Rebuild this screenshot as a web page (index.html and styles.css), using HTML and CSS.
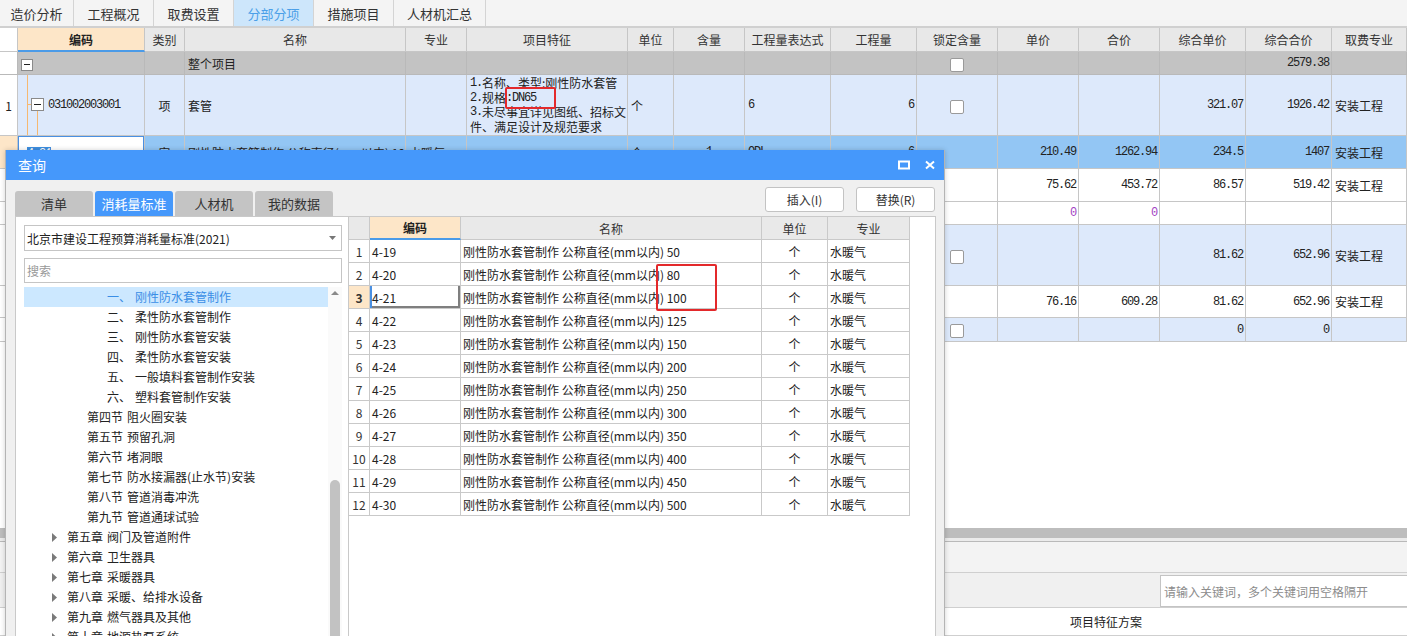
FILE: index.html
```html
<!DOCTYPE html>
<html lang="zh-CN">
<head>
<meta charset="utf-8">
<title>分部分项</title>
<link rel="stylesheet" href="styles.css">
</head>
<body>
<div class="app">
  <nav class="topbar">
    <div class="tab w74">造价分析</div>
    <div class="tab w80">工程概况</div>
    <div class="tab w80">取费设置</div>
    <div class="tab w80 active">分部分项</div>
    <div class="tab w80">措施项目</div>
    <div class="tab w92">人材机汇总</div>
  </nav>

  <div class="grid-area">
    <table class="grid">
      <colgroup>
        <col class="c-no"><col class="c-code"><col class="c-type"><col class="c-name"><col class="c-major"><col class="c-feat"><col class="c-unit"><col class="c-qty"><col class="c-expr"><col class="c-amt"><col class="c-lock"><col class="c-price"><col class="c-total"><col class="c-uprice"><col class="c-utotal"><col class="c-fee">
      </colgroup>
      <thead>
        <tr class="r-h">
          <th class="rn"></th><th class="th-code">编码</th><th>类别</th><th>名称</th><th>专业</th><th>项目特征</th><th>单位</th><th>含量</th><th>工程量表达式</th><th>工程量</th><th>锁定含量</th><th>单价</th><th>合价</th><th>综合单价</th><th>综合合价</th><th>取费专业</th>
        </tr>
      </thead>
      <tbody>
        <tr class="r-total">
          <td class="rn"></td>
          <td class="code0"><span class="mbox"></span></td>
          <td></td>
          <td class="bold">整个项目</td>
          <td></td><td></td><td></td><td></td><td></td><td></td>
          <td class="ctr"><span class="cb"></span></td>
          <td></td><td></td><td></td>
          <td class="n bold">2579.38</td>
          <td></td>
        </tr>
        <tr class="r-tall lb">
          <td class="rn">1</td>
          <td class="code0"><div class="codewrap"><svg class="tree-lines" width="30" height="60" viewBox="0 0 30 60"><path d="M9.5 0V60M9.5 29.5H14M19.5 35.5V60" stroke="#f6b870" stroke-width="1" fill="none"/><rect x="13.5" y="23.5" width="12" height="12" fill="#fff" stroke="#8a8a8a"/><path d="M16 29.5H23" stroke="#222" stroke-width="1"/></svg><span class="mono">031002003001</span></div></td>
          <td class="ctr">项</td>
          <td>套管</td>
          <td></td>
          <td class="feat">
            <div class="fl"><span class="mono">1.</span>名称、类型:刚性防水套管</div>
            <div class="fl"><span class="mono">2.</span>规格<span class="mono">:DN65</span></div>
            <div class="fl"><span class="mono">3.</span>未尽事宜详见图纸、招标文</div>
            <div class="fl">件、满足设计及规范要求</div>
          </td>
          <td>个</td>
          <td></td>
          <td class="mono">6</td>
          <td class="n">6</td>
          <td class="ctr"><span class="cb"></span></td>
          <td></td><td></td>
          <td class="n">321.07</td>
          <td class="n">1926.42</td>
          <td>安装工程</td>
        </tr>
        <tr class="r-a sel">
          <td class="rn peach"></td>
          <td class="edit"><span class="selt">4-21</span></td>
          <td class="ctr">安</td>
          <td>刚性防水套管制作 公称直径(mm以内) 100</td>
          <td>水暖气</td>
          <td></td>
          <td>个</td>
          <td class="ctr mono">1</td>
          <td class="mono">QDL</td>
          <td class="n">6</td>
          <td></td>
          <td class="n">210.49</td>
          <td class="n">1262.94</td>
          <td class="n">234.5</td>
          <td class="n">1407</td>
          <td>安装工程</td>
        </tr>
        <tr class="r-a">
          <td class="rn"></td>
          <td class="mono pl">补充主材001</td>
          <td class="ctr">主</td>
          <td>钢套管</td>
          <td></td><td></td>
          <td>个</td>
          <td class="ctr mono">1</td>
          <td></td>
          <td class="n">6</td>
          <td></td>
          <td class="n">75.62</td>
          <td class="n">453.72</td>
          <td class="n">86.57</td>
          <td class="n">519.42</td>
          <td>安装工程</td>
        </tr>
        <tr class="r-c">
          <td class="rn"></td>
          <td class="mono pl">01290001</td>
          <td class="ctr">材</td>
          <td>钢板</td>
          <td></td><td></td>
          <td>kg</td>
          <td></td><td></td><td></td><td></td>
          <td class="n purple">0</td>
          <td class="n purple">0</td>
          <td></td><td></td><td></td>
        </tr>
        <tr class="r-tall lb">
          <td class="rn">2</td>
          <td class="mono pl2">031002003002</td>
          <td class="ctr">项</td>
          <td>套管</td>
          <td></td>
          <td class="feat"><div class="fl">1.名称、类型:刚性防水套管</div><div class="fl">2.规格:DN80</div></td>
          <td>个</td>
          <td></td>
          <td class="mono">8</td>
          <td class="n">8</td>
          <td class="ctr"><span class="cb"></span></td>
          <td></td><td></td>
          <td class="n">81.62</td>
          <td class="n">652.96</td>
          <td>安装工程</td>
        </tr>
        <tr class="r-e">
          <td class="rn"></td>
          <td class="mono pl">4-20</td>
          <td class="ctr">安</td>
          <td>刚性防水套管制作 公称直径(mm以内) 80</td>
          <td>水暖气</td>
          <td></td>
          <td>个</td>
          <td class="ctr mono">1</td>
          <td class="mono">QDL</td>
          <td class="n">8</td>
          <td></td>
          <td class="n">76.16</td>
          <td class="n">609.28</td>
          <td class="n">81.62</td>
          <td class="n">652.96</td>
          <td>安装工程</td>
        </tr>
        <tr class="r-f lb">
          <td class="rn">3</td>
          <td></td><td></td><td></td><td></td><td></td><td></td><td></td><td></td><td></td>
          <td class="ctr"><span class="cb"></span></td>
          <td></td><td></td>
          <td class="n">0</td>
          <td class="n">0</td>
          <td></td>
        </tr>
      </tbody>
    </table>
  </div>

  <div class="lower">
    <div class="hbar"></div>
    <div class="hgap"></div>
    <div class="ltool"></div>
    <div class="lsearch"><input class="kw" type="text" placeholder="请输入关键词，多个关键词用空格隔开"></div>
    <div class="lhead"><div class="sp"></div><div class="lcol">项目特征方案</div><div class="lrest"></div></div>
  </div>

  <section class="dialog">
    <header class="dlg-title">
      <span class="dlg-name">查询</span>
      <span class="dlg-icons">
        <svg width="12" height="10" viewBox="0 0 12 10"><rect x="1" y="1.5" width="10" height="7" fill="none" stroke="#fff" stroke-width="2"/></svg>
        <svg width="10" height="10" viewBox="0 0 10 10"><path d="M1 1.5L9 8.5M9 1.5L1 8.5" stroke="#fff" stroke-width="2" fill="none"/></svg>
      </span>
    </header>
    <div class="dlg-top">
      <div class="dtabs">
        <div class="dtab">清单</div>
        <div class="dtab on">消耗量标准</div>
        <div class="dtab">人材机</div>
        <div class="dtab">我的数据</div>
      </div>
      <div class="dbtns">
        <button class="btn">插入(I)</button>
        <button class="btn">替换(R)</button>
      </div>
    </div>
    <div class="dlg-main">
      <div class="lpanel">
        <div class="combo"><span>北京市建设工程预算消耗量标准(2021)</span><svg width="7" height="4" viewBox="0 0 7 4"><path d="M0 0H7L3.5 4Z" fill="#777"/></svg></div>
        <div class="searchbox">搜索</div>
        <div class="tree">
          <ul class="tree-list">
            <li class="l3 cur"><span class="ord">一、</span>刚性防水套管制作</li>
            <li class="l3"><span class="ord">二、</span>柔性防水套管制作</li>
            <li class="l3"><span class="ord">三、</span>刚性防水套管安装</li>
            <li class="l3"><span class="ord">四、</span>柔性防水套管安装</li>
            <li class="l3"><span class="ord">五、</span>一般填料套管制作安装</li>
            <li class="l3"><span class="ord">六、</span>塑料套管制作安装</li>
            <li class="l2"><span class="ord">第四节</span>阻火圈安装</li>
            <li class="l2"><span class="ord">第五节</span>预留孔洞</li>
            <li class="l2"><span class="ord">第六节</span>堵洞眼</li>
            <li class="l2"><span class="ord">第七节</span>防水接漏器(止水节)安装</li>
            <li class="l2"><span class="ord">第八节</span>管道消毒冲洗</li>
            <li class="l2"><span class="ord">第九节</span>管道通球试验</li>
            <li class="l1"><svg class="arr" width="5" height="9" viewBox="0 0 5 9"><path d="M0 0L5 4.5L0 9Z" fill="#7a7a7a"/></svg><span class="ord">第五章</span>阀门及管道附件</li>
            <li class="l1"><svg class="arr" width="5" height="9" viewBox="0 0 5 9"><path d="M0 0L5 4.5L0 9Z" fill="#7a7a7a"/></svg><span class="ord">第六章</span>卫生器具</li>
            <li class="l1"><svg class="arr" width="5" height="9" viewBox="0 0 5 9"><path d="M0 0L5 4.5L0 9Z" fill="#7a7a7a"/></svg><span class="ord">第七章</span>采暖器具</li>
            <li class="l1"><svg class="arr" width="5" height="9" viewBox="0 0 5 9"><path d="M0 0L5 4.5L0 9Z" fill="#7a7a7a"/></svg><span class="ord">第八章</span>采暖、给排水设备</li>
            <li class="l1"><svg class="arr" width="5" height="9" viewBox="0 0 5 9"><path d="M0 0L5 4.5L0 9Z" fill="#7a7a7a"/></svg><span class="ord">第九章</span>燃气器具及其他</li>
            <li class="l1"><svg class="arr" width="5" height="9" viewBox="0 0 5 9"><path d="M0 0L5 4.5L0 9Z" fill="#7a7a7a"/></svg><span class="ord">第十章</span>地源热泵系统</li>
          </ul>
          <div class="vscroll">
            <svg class="uparr" width="14" height="12" viewBox="0 0 14 12"><path d="M3 8H11L7 4Z" fill="#8a8a8a"/></svg>
            <div class="vspace"></div>
            <div class="thumb"></div>
          </div>
        </div>
      </div>
      <div class="rpanel">
        <table class="qtable">
          <colgroup><col class="q-no"><col class="q-code"><col class="q-name"><col class="q-unit"><col class="q-major"></colgroup>
          <thead>
            <tr><th></th><th class="th-code">编码</th><th>名称</th><th>单位</th><th>专业</th></tr>
          </thead>
          <tbody>
            <tr><td class="q-rn">1</td><td>4-19</td><td>刚性防水套管制作 公称直径(mm以内) 50</td><td class="ctr">个</td><td>水暖气</td></tr>
            <tr><td class="q-rn">2</td><td>4-20</td><td>刚性防水套管制作 公称直径(mm以内) 80</td><td class="ctr">个</td><td>水暖气</td></tr>
            <tr class="q-cur"><td class="q-rn">3</td><td class="q-focus">4-21</td><td>刚性防水套管制作 公称直径(mm以内) 100</td><td class="ctr">个</td><td>水暖气</td></tr>
            <tr><td class="q-rn">4</td><td>4-22</td><td>刚性防水套管制作 公称直径(mm以内) 125</td><td class="ctr">个</td><td>水暖气</td></tr>
            <tr><td class="q-rn">5</td><td>4-23</td><td>刚性防水套管制作 公称直径(mm以内) 150</td><td class="ctr">个</td><td>水暖气</td></tr>
            <tr><td class="q-rn">6</td><td>4-24</td><td>刚性防水套管制作 公称直径(mm以内) 200</td><td class="ctr">个</td><td>水暖气</td></tr>
            <tr><td class="q-rn">7</td><td>4-25</td><td>刚性防水套管制作 公称直径(mm以内) 250</td><td class="ctr">个</td><td>水暖气</td></tr>
            <tr><td class="q-rn">8</td><td>4-26</td><td>刚性防水套管制作 公称直径(mm以内) 300</td><td class="ctr">个</td><td>水暖气</td></tr>
            <tr><td class="q-rn">9</td><td>4-27</td><td>刚性防水套管制作 公称直径(mm以内) 350</td><td class="ctr">个</td><td>水暖气</td></tr>
            <tr><td class="q-rn">10</td><td>4-28</td><td>刚性防水套管制作 公称直径(mm以内) 400</td><td class="ctr">个</td><td>水暖气</td></tr>
            <tr><td class="q-rn">11</td><td>4-29</td><td>刚性防水套管制作 公称直径(mm以内) 450</td><td class="ctr">个</td><td>水暖气</td></tr>
            <tr><td class="q-rn">12</td><td>4-30</td><td>刚性防水套管制作 公称直径(mm以内) 500</td><td class="ctr">个</td><td>水暖气</td></tr>
          </tbody>
        </table>
      </div>
    </div>
  </section>

  <div class="mark mark-a"></div>
  <div class="mark mark-b"></div>
</div>
</body>
</html>
```

FILE: styles.css
```css
* { box-sizing: border-box; margin: 0; padding: 0; }
html, body { width: 1407px; height: 636px; overflow: hidden; background: #fff; }
body { font-family: "Noto Sans CJK SC", "Noto Sans", sans-serif; font-size: 12px; color: #222; }

.app { position: relative; width: 1407px; height: 636px; display: flex; flex-direction: column; overflow: hidden; }

/* top tabs */
.topbar { flex: none; height: 28px; display: flex; background: #f4f4f4; border-bottom: 2px solid #d0d0d0; }
.tab { height: 26px; display: flex; align-items: center; justify-content: center; border-right: 1px solid #d4d4d4; font-size: 13px; color: #333; }
.w74 { width: 74px; }
.w80 { width: 80px; }
.w92 { width: 92px; }
.tab.active { background: #cde6fb; color: #4b9fe8; }

/* main grid */
.grid-area { flex: none; height: 500px; overflow: hidden; background: #fff; }
.grid { border-collapse: separate; border-spacing: 0; table-layout: fixed; width: 1407px; }
.c-no { width: 18px; } .c-code { width: 127px; } .c-type { width: 40px; } .c-name { width: 221px; }
.c-major { width: 61px; } .c-feat { width: 161px; } .c-unit { width: 46px; } .c-qty { width: 71px; }
.c-expr { width: 86px; } .c-amt { width: 86px; } .c-lock { width: 81px; } .c-price { width: 81px; }
.c-total { width: 81px; } .c-uprice { width: 86px; } .c-utotal { width: 86px; } .c-fee { width: 75px; }

.grid th, .grid td { border-right: 1px solid #c6c6c6; border-bottom: 1px solid #c6c6c6; padding: 0 3px; white-space: nowrap; overflow: hidden; vertical-align: middle; font-weight: normal; font-size: 12px; text-align: left; }
.grid th { height: 24px; background: #e8e8e8; color: #333; text-align: center; }
.grid th.th-code { background: #fde6c8; font-weight: bold; border-bottom: 2px solid #4b9be8; color: #222; }
.grid .rn { background: #fff; text-align: center; padding: 0; color: #222; }
.grid .rn.peach { background: #fde6c8; }

.r-total td { height: 23px; background: #c3c3c3; border-color: #b9b9b9; }
.r-tall td { height: 61px; }
.r-a td { height: 33px; }
.r-c td { height: 23px; }
.r-e td { height: 32px; }
.r-f td { height: 24px; }
.lb td { background: #dde9fb; }
.sel td { background: #93c6f4; }

.grid .ctr { text-align: center; }
.grid .n { text-align: right; font-family: "Liberation Mono", monospace; letter-spacing: -1.2px; padding-right: 2px; }
.mono { font-family: "Liberation Mono", monospace; letter-spacing: -1.2px; }
.bold { font-weight: bold; }
.purple { color: #a23fc4; }
.pl { padding-left: 8px !important; }
.pl2 { padding-left: 30px !important; }

.code0 { padding: 0 !important; }
.codewrap { display: flex; align-items: center; height: 60px; }
.tree-lines { display: block; flex: none; }
.mbox { display: inline-block; width: 12px; height: 12px; margin-left: 3px; border: 1px solid #8a8a8a; background: #fff; position: relative; vertical-align: middle; }
.mbox::after { content: ""; position: absolute; left: 2px; right: 2px; top: 4px; height: 1px; background: #222; }
.cb { display: inline-block; width: 14px; height: 14px; border: 1px solid #9a9a9a; border-radius: 2px; background: #fff; vertical-align: middle; }
.grid td.feat { white-space: nowrap; padding: 0 0 0 3px; }
.fl { height: 14.5px; line-height: 14.5px; display: flex; align-items: center; white-space: nowrap; overflow: visible; }

.grid td.edit { background: #fff; box-shadow: inset 0 0 0 1px #4a90e2; padding-left: 9px; }
.selt { background: #3d8ee0; color: #fff; font-family: "Liberation Mono", monospace; letter-spacing: -1.2px; }

/* lower panel */
.lower { flex: none; height: 108px; display: flex; flex-direction: column; background: #fff; }
.hbar { height: 10px; background: #bdbdbd; }
.hgap { height: 4px; background: #ebebeb; border-bottom: 1px solid #b9b9b9; }
.ltool { height: 31px; background: #f3f3f3; border-bottom: 1px solid #cfcfcf; }
.lsearch { height: 35px; background: #f0f0f0; border-bottom: 1px solid #cfcfcf; display: flex; justify-content: flex-end; padding-top: 2px; }
.kw { width: 247px; height: 32px; border: 1px solid #c4c4c4; border-right: none; background: #fff; font-family: "Noto Sans CJK SC", sans-serif; font-size: 12px; padding-left: 3px; outline: none; color: #333; }
.kw::placeholder { color: #8c8c8c; }
.lhead { height: 28px; display: flex; border-bottom: 1px solid #cfcfcf; }
.lhead .sp { width: 945px; }
.lhead .lcol { width: 322px; text-align: center; line-height: 27px; font-size: 12px; color: #222; }
.lhead .lrest { flex: 1; }

/* dialog */
.dialog { position: absolute; left: 5px; top: 150px; width: 940px; height: 490px; background: #f0f0f0; border-left: 1px solid #b4b4b4; border-right: 1px solid #b4b4b4; display: flex; flex-direction: column; box-shadow: 0 0 5px rgba(0,0,0,0.18); z-index: 2; }
.dlg-title { flex: none; height: 30px; background: #4598fb; display: flex; align-items: center; justify-content: space-between; padding: 0 9px 0 12px; color: #fff; font-size: 14px; }
.dlg-icons { display: flex; align-items: center; gap: 15px; }
.dlg-icons svg { display: block; }

.dlg-top { flex: none; height: 36px; display: flex; justify-content: space-between; padding: 0 9px; }
.dtabs { align-self: flex-end; display: flex; gap: 2px; }
.dtab { width: 78px; height: 25px; background: #c4c4c4; border-radius: 3px 3px 0 0; display: flex; align-items: center; justify-content: center; font-size: 13px; color: #333; }
.dtab.on { background: #4598fb; color: #fff; }
.dbtns { display: flex; gap: 12px; margin-top: 7px; }
.btn { width: 79px; height: 25px; background: #fff; border: 1px solid #c3c3c3; border-radius: 3px; font-family: "Noto Sans CJK SC", sans-serif; font-size: 12px; color: #333; }

.dlg-main { flex: 1; min-height: 0; display: flex; padding-left: 9px; }
.lpanel { width: 333px; background: #fff; border: 1px solid #c9c9c9; border-right: none; border-bottom: none; padding: 8px 6px 0 8px; display: flex; flex-direction: column; min-height: 0; }
.combo { flex: none; height: 26px; border: 1px solid #c5c5c5; display: flex; align-items: center; justify-content: space-between; padding: 0 5px 0 2px; font-size: 12px; color: #222; }
.searchbox { flex: none; margin-top: 7px; height: 25px; border: 1px solid #c5c5c5; color: #999; padding-left: 2px; line-height: 23px; }
.tree { margin-top: 4px; flex: 1; min-height: 0; display: flex; overflow: hidden; }
.tree-list { flex: 1; list-style: none; }
.tree-list li { height: 20px; line-height: 20px; white-space: nowrap; color: #222; display: flex; align-items: center; }
.tree-list li.cur { background: #cce8ff; color: #3a8ee6; }
.ord { margin-right: 4px; }
.l3 { padding-left: 83px; }
.l2 { padding-left: 63px; }
.l1 { padding-left: 28px; }
.arr { display: block; margin-right: 10px; flex: none; }
.vscroll { width: 14px; flex: none; display: flex; flex-direction: column; background: #fafafa; }
.uparr { display: block; flex: none; }
.vspace { height: 181px; flex: none; }
.thumb { flex: 1; margin: 0 2px; background: #c2c2c2; border-radius: 5px; }

.rpanel { width: 588px; background: #fff; border: 1px solid #c9c9c9; border-bottom: none; }
.qtable { border-collapse: separate; border-spacing: 0; table-layout: fixed; width: 561px; }
.q-no { width: 21px; } .q-code { width: 91px; } .q-name { width: 301px; } .q-unit { width: 66px; } .q-major { width: 82px; }
.qtable th, .qtable td { height: 23px; border-right: 1px solid #c9c9c9; border-bottom: 1px solid #c9c9c9; padding: 0 2px; white-space: nowrap; overflow: hidden; font-weight: normal; font-size: 12px; text-align: left; color: #222; }
.qtable th { background: #e9e9e9; color: #333; text-align: center; }
.qtable th.th-code { background: #fde6c8; font-weight: bold; border-bottom: 2px solid #4b9be8; color: #222; }
.qtable .q-rn { text-align: center; padding: 0; color: #333; }
.qtable .ctr { text-align: center; }
.q-cur .q-rn { background: #fde6c8; font-weight: bold; }
.qtable td.q-focus { box-shadow: inset 2px 0 0 #4a90e2, inset -2px -2px 0 #7f7f7f; }

/* red annotation boxes */
.mark { position: absolute; border: 2px solid #e3292b; border-radius: 2px; pointer-events: none; z-index: 5; }
.mark-a { left: 505px; top: 87px; width: 51px; height: 22px; }
.mark-b { left: 656px; top: 264px; width: 61px; height: 47px; }
```
